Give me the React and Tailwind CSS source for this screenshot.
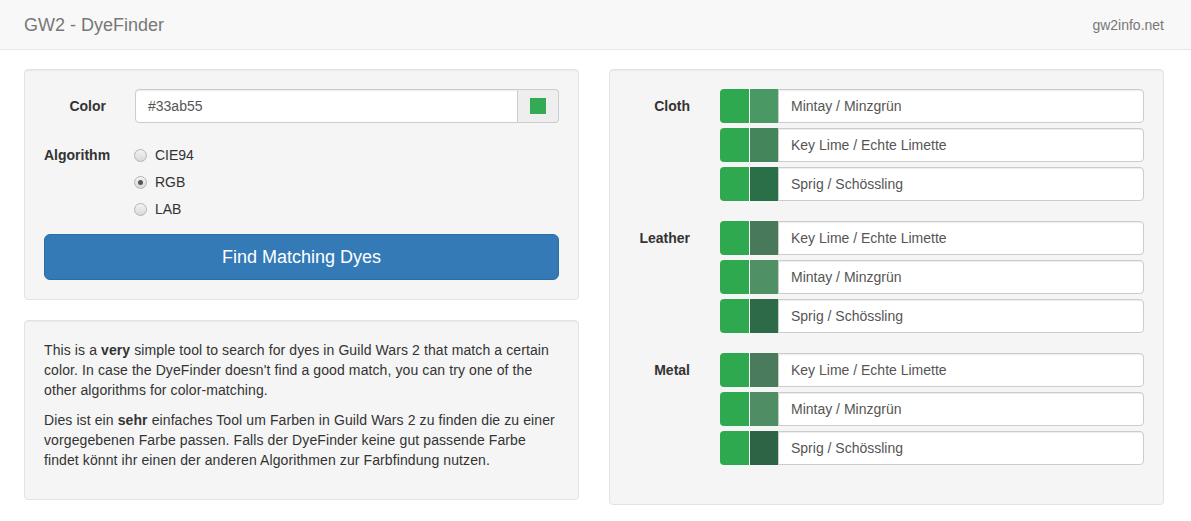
import React from "react";

const groups = [
  {
    label: "Cloth",
    rows: [
      { name: "Mintay / Minzgrün", c: "#4a9863" },
      { name: "Key Lime / Echte Limette", c: "#44855b" },
      { name: "Sprig / Schössling", c: "#2a6f47" },
    ],
  },
  {
    label: "Leather",
    rows: [
      { name: "Key Lime / Echte Limette", c: "#48795b" },
      { name: "Mintay / Minzgrün", c: "#4f9064" },
      { name: "Sprig / Schössling", c: "#2d6a48" },
    ],
  },
  {
    label: "Metal",
    rows: [
      { name: "Key Lime / Echte Limette", c: "#497b5c" },
      { name: "Mintay / Minzgrün", c: "#4f8e65" },
      { name: "Sprig / Schössling", c: "#2d6446" },
    ],
  },
];

function Radio({ checked, label }) {
  return (
    <div className="h-[27px] pt-[7px] flex items-start">
      <div className="h-[20px] flex items-center">
        <span className="ml-[90px] w-[13px] h-[13px] rounded-full border border-[#b4b4b4] bg-gradient-to-b from-[#f4f4f4] to-[#d8d8d8] flex items-center justify-center">
          {checked && <span className="w-[5px] h-[5px] rounded-full bg-[#555]" />}
        </span>
        <span className="ml-[8px] text-[14px] leading-[20px] text-[#333]">{label}</span>
      </div>
    </div>
  );
}

export default function App() {
  return (
    <div className="min-h-[521px] bg-white text-[#333] text-[14px] leading-[20px]" style={{ fontFamily: '"Liberation Sans", Arial, sans-serif' }}>
      <div className="h-[50px] bg-[#f8f8f8] border-b border-[#e7e7e7] flex items-center justify-between pl-[24px] pr-[27px] mb-[19px]">
        <span className="text-[18px] leading-[20px] text-[#777]">GW2 - DyeFinder</span>
        <span className="text-[14px] text-[#777]">gw2info.net</span>
      </div>
      <div className="ml-[24px] w-[1140px] grid grid-cols-2 gap-[30px] items-start">
        <div>
          <div className="bg-[#f5f5f5] border border-[#e3e3e3] rounded-[4px] p-[19px] shadow-[inset_0_1px_1px_rgba(0,0,0,0.05)] mb-[20px]">
            <div className="flex items-start mb-[15px]">
              <div className="w-[62px] pt-[7px] text-right font-bold whitespace-nowrap">Color</div>
              <div className="ml-[29px] flex-1 flex h-[34px]">
                <div className="flex-1 border border-[#ccc] rounded-l-[4px] bg-white px-[12px] flex items-center text-[#555] shadow-[inset_0_1px_1px_rgba(0,0,0,0.075)]">#33ab55</div>
                <div className="w-[41px] border border-l-0 border-[#ccc] rounded-r-[4px] bg-[#eee] flex items-center justify-center">
                  <span className="w-[16px] h-[16px] bg-[#33ab55]" />
                </div>
              </div>
            </div>
            <div className="flex items-start mb-[15px]">
              <div className="w-[61px] pt-[7px] font-bold whitespace-nowrap">Algorithm</div>
              <div className="flex-1 -ml-[61px]">
                <Radio label="CIE94" />
                <Radio label="RGB" checked />
                <Radio label="LAB" />
              </div>
            </div>
            <button className="w-full h-[46px] bg-[#337ab7] border border-[#2e6da4] rounded-[6px] text-white text-[18px] leading-[24px]">Find Matching Dyes</button>
          </div>
          <div className="bg-[#f5f5f5] border border-[#e3e3e3] rounded-[4px] p-[19px] shadow-[inset_0_1px_1px_rgba(0,0,0,0.05)] tracking-[0.1px]">
            <p className="mb-[10px]">This is a <b>very</b> simple tool to search for dyes in Guild Wars 2 that match a certain color. In case the DyeFinder doesn't find a good match, you can try one of the other algorithms for color-matching.</p>
            <p className="mb-[10px]">Dies ist ein <b>sehr</b> einfaches Tool um Farben in Guild Wars 2 zu finden die zu einer vorgegebenen Farbe passen. Falls der DyeFinder keine gut passende Farbe findet könnt ihr einen der anderen Algorithmen zur Farbfindung nutzen.</p>
          </div>
        </div>
        <div className="bg-[#f5f5f5] border border-[#e3e3e3] rounded-[4px] p-[19px] shadow-[inset_0_1px_1px_rgba(0,0,0,0.05)]">
          {groups.map((g) => (
            <div key={g.label} className="flex items-start mb-[15px]">
              <div className="w-[61px] pt-[7px] text-right font-bold whitespace-nowrap">{g.label}</div>
              <div className="ml-[30px] flex-1 flex flex-col">
                {g.rows.map((r, i) => (
                  <div key={i} className="flex h-[34px] mb-[5px]">
                    <span className="w-[29px] bg-[#2fa94f] rounded-l-[4px]" />
                    <span className="w-[29px] border-l border-white" style={{ backgroundColor: r.c }} />
                    <div className="flex-1 border border-[#ccc] rounded-r-[4px] bg-white px-[12px] flex items-center text-[#555] shadow-[inset_0_1px_1px_rgba(0,0,0,0.075)]">{r.name}</div>
                  </div>
                ))}
              </div>
            </div>
          ))}
        </div>
      </div>
    </div>
  );
}
